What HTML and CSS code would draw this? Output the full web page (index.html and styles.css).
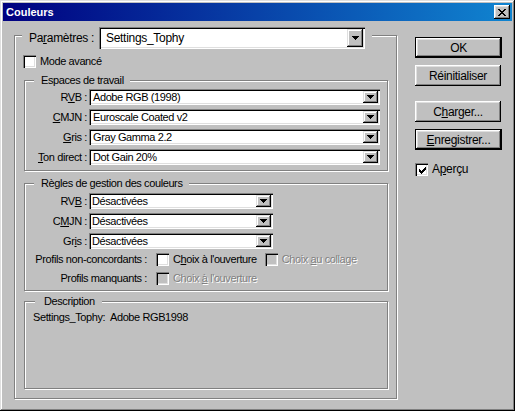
FILE: index.html
```html
<!DOCTYPE html>
<html lang="fr">
<head>
<meta charset="utf-8">
<title>Couleurs</title>
<link rel="stylesheet" href="styles.css">
</head>
<body>
<div class="window">
  <div class="titlebar">
    <span class="title">Couleurs</span>
    <span class="close">
      <svg width="8" height="7" viewBox="0 0 8 7" shape-rendering="crispEdges"><g fill="#000"><rect x="0" y="0" width="2" height="1"/><rect x="6" y="0" width="2" height="1"/><rect x="1" y="1" width="2" height="1"/><rect x="5" y="1" width="2" height="1"/><rect x="2" y="2" width="4" height="1"/><rect x="3" y="3" width="2" height="1"/><rect x="2" y="4" width="4" height="1"/><rect x="1" y="5" width="2" height="1"/><rect x="5" y="5" width="2" height="1"/><rect x="0" y="6" width="2" height="1"/><rect x="6" y="6" width="2" height="1"/></g></svg>
    </span>
  </div>
  <div class="body">
    <div class="main-group">
      <div class="main-head">
        <span class="main-label">Pa<u>r</u>amètres :</span>
        <div class="select big">
          <span class="value">Settings_Tophy</span>
          <span class="arrow"><svg width="7" height="4" viewBox="0 0 7 4" shape-rendering="crispEdges"><g fill="#000"><rect x="0" y="0" width="7" height="1"/><rect x="1" y="1" width="5" height="1"/><rect x="2" y="2" width="3" height="1"/><rect x="3" y="3" width="1" height="1"/></g></svg></span>
        </div>
      </div>
      <div class="check-row mode"><span class="box"></span><span class="ctext">Mode avancé</span></div>

      <div class="group g-espaces">
        <div class="legend">Espaces de travail</div>
        <div class="rows">
          <div class="row"><span class="lbl">R<u>V</u>B :</span><div class="select wide"><span class="value">Adobe RGB (1998)</span><span class="arrow"><svg width="7" height="4" viewBox="0 0 7 4" shape-rendering="crispEdges"><g fill="#000"><rect x="0" y="0" width="7" height="1"/><rect x="1" y="1" width="5" height="1"/><rect x="2" y="2" width="3" height="1"/><rect x="3" y="3" width="1" height="1"/></g></svg></span></div></div>
          <div class="row"><span class="lbl"><u>C</u>MJN :</span><div class="select wide"><span class="value">Euroscale Coated v2</span><span class="arrow"><svg width="7" height="4" viewBox="0 0 7 4" shape-rendering="crispEdges"><g fill="#000"><rect x="0" y="0" width="7" height="1"/><rect x="1" y="1" width="5" height="1"/><rect x="2" y="2" width="3" height="1"/><rect x="3" y="3" width="1" height="1"/></g></svg></span></div></div>
          <div class="row"><span class="lbl"><u>G</u>ris :</span><div class="select wide"><span class="value">Gray Gamma 2.2</span><span class="arrow"><svg width="7" height="4" viewBox="0 0 7 4" shape-rendering="crispEdges"><g fill="#000"><rect x="0" y="0" width="7" height="1"/><rect x="1" y="1" width="5" height="1"/><rect x="2" y="2" width="3" height="1"/><rect x="3" y="3" width="1" height="1"/></g></svg></span></div></div>
          <div class="row"><span class="lbl"><u>T</u>on direct :</span><div class="select wide"><span class="value">Dot Gain 20%</span><span class="arrow"><svg width="7" height="4" viewBox="0 0 7 4" shape-rendering="crispEdges"><g fill="#000"><rect x="0" y="0" width="7" height="1"/><rect x="1" y="1" width="5" height="1"/><rect x="2" y="2" width="3" height="1"/><rect x="3" y="3" width="1" height="1"/></g></svg></span></div></div>
        </div>
      </div>

      <div class="group g-regles">
        <div class="legend">Règles de gestion des couleurs</div>
        <div class="rows r-regles">
          <div class="row"><span class="lbl">RV<u>B</u> :</span><div class="select narrow"><span class="value">Désactivées</span><span class="arrow"><svg width="7" height="4" viewBox="0 0 7 4" shape-rendering="crispEdges"><g fill="#000"><rect x="0" y="0" width="7" height="1"/><rect x="1" y="1" width="5" height="1"/><rect x="2" y="2" width="3" height="1"/><rect x="3" y="3" width="1" height="1"/></g></svg></span></div></div>
          <div class="row"><span class="lbl">C<u>M</u>JN :</span><div class="select narrow"><span class="value">Désactivées</span><span class="arrow"><svg width="7" height="4" viewBox="0 0 7 4" shape-rendering="crispEdges"><g fill="#000"><rect x="0" y="0" width="7" height="1"/><rect x="1" y="1" width="5" height="1"/><rect x="2" y="2" width="3" height="1"/><rect x="3" y="3" width="1" height="1"/></g></svg></span></div></div>
          <div class="row"><span class="lbl">Gr<u>i</u>s :</span><div class="select narrow"><span class="value">Désactivées</span><span class="arrow"><svg width="7" height="4" viewBox="0 0 7 4" shape-rendering="crispEdges"><g fill="#000"><rect x="0" y="0" width="7" height="1"/><rect x="1" y="1" width="5" height="1"/><rect x="2" y="2" width="3" height="1"/><rect x="3" y="3" width="1" height="1"/></g></svg></span></div></div>
        </div>
        <div class="prow p1">
          <span class="plbl">Profils non-concordants :</span>
          <span class="box"></span><span class="ctext">C<u>h</u>oix à l'ouverture</span>
          <span class="box disabled second"></span><span class="ctext dis">Choix <u>a</u>u collage</span>
        </div>
        <div class="prow p2">
          <span class="plbl">Profils manquants :</span>
          <span class="box disabled"></span><span class="ctext dis">Choix <u>à</u> l'ouverture</span>
        </div>
      </div>

      <div class="group g-desc">
        <div class="legend l-desc">Description</div>
        <div class="desc-text">Settings_Tophy:&nbsp; Adobe RGB1998</div>
      </div>
    </div>

    <div class="buttons">
      <div class="btn default b-ok">OK</div>
      <div class="btn b-reinit">Réinitialiser</div>
      <div class="btn b-charger">C<u>h</u>arger...</div>
      <div class="btn default b-enreg"><u>E</u>nregistrer...</div>
      <div class="check-row apercu">
        <span class="box checked"><svg width="7" height="7" viewBox="0 0 7 7" shape-rendering="crispEdges"><g fill="#000"><rect x="6" y="0" width="1" height="1"/><rect x="5" y="1" width="2" height="1"/><rect x="0" y="2" width="1" height="1"/><rect x="4" y="2" width="3" height="1"/><rect x="0" y="3" width="2" height="1"/><rect x="3" y="3" width="3" height="1"/><rect x="0" y="4" width="5" height="1"/><rect x="1" y="5" width="3" height="1"/><rect x="2" y="6" width="1" height="1"/></g></svg></span>
        <span class="ctext big-text">A<u>p</u>erçu</span>
      </div>
    </div>
  </div>
</div>
</body>
</html>
```
FILE: styles.css
```css
* { box-sizing: border-box; }
html, body { margin: 0; padding: 0; }
body {
  width: 515px;
  height: 411px;
  overflow: hidden;
  background: #c0c0c0;
  font-family: "Liberation Sans", Arial, sans-serif;
  font-size: 11px;
  letter-spacing: -0.4px;
  color: #000;
}
u { text-decoration: underline; text-underline-offset: 1px; }

.window {
  width: 515px;
  height: 411px;
  padding: 3px;
  background: #c0c0c0;
  box-shadow: inset -1px -1px #000, inset 1px 1px #dfdfdf, inset -2px -2px #808080, inset 2px 2px #fff;
  display: flex;
  flex-direction: column;
}

.titlebar {
  height: 18px;
  flex: none;
  background: linear-gradient(to right, #000080, #1084d0);
  display: flex;
  align-items: center;
  justify-content: space-between;
  padding: 0 2px 0 3px;
}
.title {
  color: #fff;
  font-weight: bold;
  font-size: 11px;
  letter-spacing: 0;
  line-height: 18px;
}
.close {
  width: 16px;
  height: 14px;
  background: #c0c0c0;
  box-shadow: inset -1px -1px #000, inset 1px 1px #fff, inset -2px -2px #808080, inset 2px 2px #dfdfdf;
  display: flex;
  align-items: center;
  justify-content: center;
  padding-left: 0;
}
.close svg { display: block; margin-top: 0; }

.body {
  display: flex;
  align-items: flex-start;
  padding-left: 11px;
}

.main-group {
  margin-top: 14px;
  width: 383px;
  height: 364px;
  border: 1px solid #808080;
  box-shadow: 1px 1px 0 #fff, inset 1px 1px 0 #fff;
}
.main-head {
  display: flex;
  align-items: center;
  width: max-content;
  height: 22px;
  margin: -9px 0 0 7px;
  padding: 0 7px;
  background: #c0c0c0;
  font-size: 12px;
  letter-spacing: -0.3px;
}
.main-label { width: 70px; line-height: 14px; }

/* select fields */
.select {
  display: flex;
  align-items: stretch;
  background: #fff;
  padding: 2px;
  box-shadow: inset 1px 1px #808080, inset 2px 2px #000, inset -1px -1px #fff, inset -2px -2px #dfdfdf;
}
.select .value {
  flex: 1;
  display: flex;
  align-items: center;
  padding-left: 2px;
  white-space: nowrap;
  overflow: hidden;
}
.select .arrow {
  width: 15px;
  flex: none;
  background: #c0c0c0;
  box-shadow: inset -1px -1px #000, inset 1px 1px #dfdfdf, inset -2px -2px #808080, inset 2px 2px #fff;
  display: flex;
  align-items: center;
  justify-content: center;
}
.select .arrow svg { display: block; }
.select.big { width: 266px; height: 22px; }
.select.big .value { padding-left: 5px; }
.select.big .arrow { width: 16px; }
.select.wide { width: 291px; height: 16px; }
.select.narrow { width: 184px; height: 16px; }
.select.narrow .value { padding-left: 1px; }

/* checkboxes */
.check-row { display: flex; align-items: center; height: 13px; }
.box {
  width: 13px;
  height: 13px;
  flex: none;
  background: #fff;
  box-shadow: inset 1px 1px #808080, inset 2px 2px #000, inset -1px -1px #fff, inset -2px -2px #dfdfdf;
  display: flex;
  align-items: center;
  justify-content: center;
}
.box.disabled { background: #c0c0c0; }
.box.checked svg { display: block; margin: 1px 0 0 1px; }
.ctext { margin-left: 4px; white-space: nowrap; line-height: 13px; }
.ctext.dis { color: #808080; text-shadow: 1px 1px 0 #fff; }
.mode { margin: 6px 0 0 8px; }

/* group boxes */
.group {
  margin-left: 9px;
  width: 364px;
  border: 1px solid #808080;
  box-shadow: 1px 1px 0 #fff, inset 1px 1px 0 #fff;
}
.legend {
  width: max-content;
  margin: -7px 0 0 9px;
  padding: 0 6px 0 7px;
  background: #c0c0c0;
  line-height: 13px;
  white-space: nowrap;
}
.legend.l-desc { margin-left: 10px; padding: 0 7px 0 9px; }

.g-espaces { margin-top: 12px; height: 91px; }
.g-regles { margin-top: 12px; height: 108px; }
.g-desc { margin-top: 10px; height: 88px; }

.rows { display: flex; flex-direction: column; gap: 4px; margin-top: 2px; }
.rows.r-regles { margin-top: 3px; }
.row { display: flex; align-items: center; height: 16px; }
.lbl { width: 62px; text-align: right; margin-right: 2px; white-space: nowrap; line-height: 13px; }

.prow { display: flex; align-items: center; height: 13px; }
.prow.p1 { margin-top: 4px; }
.prow.p2 { margin-top: 6px; }
.plbl { width: 122px; text-align: right; margin-right: 9px; white-space: nowrap; line-height: 13px; }
.box.second { margin-left: 8px; }

.desc-text { margin: 3px 0 0 8px; line-height: 13px; white-space: nowrap; }

/* right-hand buttons */
.buttons {
  margin: 16px 0 0 18px;
  width: 87px;
  display: flex;
  flex-direction: column;
  font-size: 12px;
  letter-spacing: -0.3px;
}
.btn {
  width: 87px;
  height: 21px;
  display: flex;
  align-items: center;
  justify-content: center;
  background: #c0c0c0;
  box-shadow: inset -1px -1px #000, inset 1px 1px #fff, inset -2px -2px #808080, inset 2px 2px #dfdfdf;
  white-space: nowrap;
}
.btn.default {
  border: 1px solid #000;
}
.b-charger, .b-reinit { width: 86px; }
.b-reinit { margin-top: 7px; }
.b-charger { margin-top: 15px; }
.b-enreg { margin-top: 7px; }
.apercu { margin-top: 13px; }
.big-text { font-size: 12px; }
```
